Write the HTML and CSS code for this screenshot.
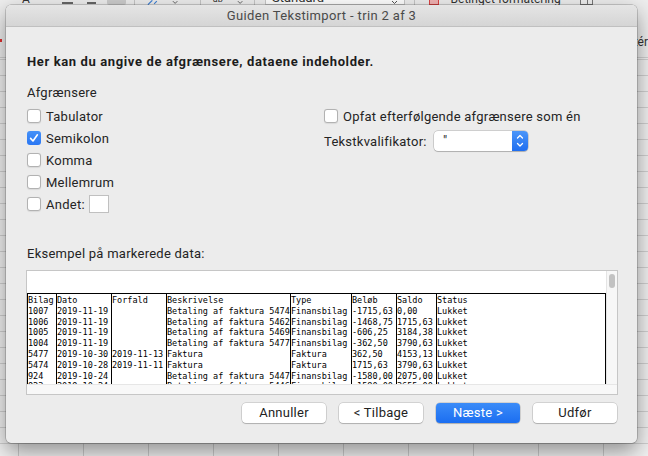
FILE: index.html
```html
<!DOCTYPE html>
<html lang="da">
<head>
<meta charset="utf-8">
<title>Guiden Tekstimport - trin 2 af 3</title>
<link rel="stylesheet" href="styles.css">
</head>
<body>
<div class="desktop">
  <div class="ribbon">
    <span class="rb-text rb-a">A</span>
    <span class="rb-dash rb-d1"></span>
    <span class="rb-dash rb-d2"></span>
    <span class="rb-hl"></span>
    <span class="rb-sep rb-s1"></span>
    <svg class="rb-icon rb-arrow" width="12" height="5" viewBox="0 0 12 5"><path d="M1 5 L6 0 M8 4 L11 1" stroke="#3b7fd6" stroke-width="1.2" fill="none"/></svg>
    <svg class="rb-chev rb-c1" width="7" height="5" viewBox="0 0 7 5"><path d="M1 1 L3.5 3.5 L6 1" stroke="#555" stroke-width="1" fill="none"/></svg>
    <span class="rb-sep rb-s2"></span>
    <span class="rb-text rb-ab">ab</span>
    <svg class="rb-chev rb-c2" width="7" height="5" viewBox="0 0 7 5"><path d="M1 1 L3.5 3.5 L6 1" stroke="#555" stroke-width="1" fill="none"/></svg>
    <span class="rb-sep rb-s3"></span>
    <span class="rb-drop"><span class="rb-text">Standard</span><svg width="7" height="5" viewBox="0 0 7 5"><path d="M1 1 L3.5 3.5 L6 1" stroke="#555" stroke-width="1" fill="none"/></svg></span>
    <span class="rb-sep rb-s4"></span>
    <span class="rb-red"></span>
    <span class="rb-text rb-cond">Betinget formatering</span>
    <span class="rb-gridicon"></span>
    <span class="rb-side"><span>Slet</span><span>Formatér</span></span>
  </div>
  <div class="sheet"></div>
  <span class="red-mark"></span>

  <div class="dialog">
    <div class="titlebar">Guiden Tekstimport - trin 2 af 3</div>
    <div class="content">
      <h1 class="heading">Her kan du angive de afgrænsere, dataene indeholder.</h1>
      <div class="options">
        <div class="col-left">
          <div class="group-label">Afgrænsere</div>
          <div class="check-row"><span class="cb"></span><span class="lbl">Tabulator</span></div>
          <div class="check-row"><span class="cb on"><svg width="14" height="14" viewBox="0 0 14 14"><path d="M3.6 7.4 L6 10 L10.4 3.8" stroke="#fff" stroke-width="1.6" fill="none" stroke-linecap="round" stroke-linejoin="round"/></svg></span><span class="lbl">Semikolon</span></div>
          <div class="check-row"><span class="cb"></span><span class="lbl">Komma</span></div>
          <div class="check-row"><span class="cb"></span><span class="lbl">Mellemrum</span></div>
          <div class="check-row"><span class="cb"></span><span class="lbl">Andet:</span><span class="other-input"></span></div>
        </div>
        <div class="col-right">
          <div class="check-row"><span class="cb"></span><span class="lbl">Opfat efterfølgende afgrænsere som én</span></div>
          <div class="qual-row">
            <span class="qual-label">Tekstkvalifikator:</span>
            <div class="select">
              <span class="select-val">"</span>
              <span class="stepper"><svg width="16" height="20" viewBox="0 0 16 20"><path d="M5.5 7 L8 4.5 L10.5 7 M5.5 12.5 L8 15 L10.5 12.5" stroke="#fff" stroke-width="1.3" fill="none" stroke-linecap="round" stroke-linejoin="round"/></svg></span>
            </div>
          </div>
        </div>
      </div>
      <div class="preview-label">Eksempel på markerede data:</div>
      <div class="preview">
        <div class="preview-body">
          <div class="data-area">
            <div class="grid">
              <span class="h">Bilag</span><span class="h">Dato</span><span class="h">Forfald</span><span class="h">Beskrivelse</span><span class="h">Type</span><span class="h">Beløb</span><span class="h">Saldo</span><span class="h">Status</span>
              <span>1007</span><span>2019-11-19</span><span></span><span>Betaling af faktura 5474</span><span>Finansbilag</span><span>-1715,63</span><span>0,00</span><span>Lukket</span>
              <span>1006</span><span>2019-11-19</span><span></span><span>Betaling af faktura 5462</span><span>Finansbilag</span><span>-1468,75</span><span>1715,63</span><span>Lukket</span>
              <span>1005</span><span>2019-11-19</span><span></span><span>Betaling af faktura 5469</span><span>Finansbilag</span><span>-606,25</span><span>3184,38</span><span>Lukket</span>
              <span>1004</span><span>2019-11-19</span><span></span><span>Betaling af faktura 5477</span><span>Finansbilag</span><span>-362,50</span><span>3790,63</span><span>Lukket</span>
              <span>5477</span><span>2019-10-30</span><span>2019-11-13</span><span>Faktura</span><span>Faktura</span><span>362,50</span><span>4153,13</span><span>Lukket</span>
              <span>5474</span><span>2019-10-28</span><span>2019-11-11</span><span>Faktura</span><span>Faktura</span><span>1715,63</span><span>3790,63</span><span>Lukket</span>
              <span>924</span><span>2019-10-24</span><span></span><span>Betaling af faktura 5447</span><span>Finansbilag</span><span>-1580,00</span><span>2075,00</span><span>Lukket</span>
              <span>923</span><span>2019-10-24</span><span></span><span>Betaling af faktura 5446</span><span>Finansbilag</span><span>-1580,00</span><span>3655,00</span><span>Lukket</span>
            </div>
          </div>
          <div class="vscroll"><div class="thumb"></div></div>
        </div>
        <div class="hstrip"></div>
      </div>
      <div class="buttons">
        <button class="btn">Annuller</button>
        <button class="btn">&lt; Tilbage</button>
        <button class="btn primary">Næste &gt;</button>
        <button class="btn">Udfør</button>
      </div>
    </div>
  </div>
</div>
</body>
</html>
```
FILE: styles.css
```css
* { box-sizing: border-box; }
html, body { margin: 0; padding: 0; }
body {
  width: 648px;
  height: 456px;
  overflow: hidden;
  font-family: Roboto, "Noto Sans", sans-serif;
}
.desktop {
  position: relative;
  width: 648px;
  height: 456px;
  overflow: hidden;
  background: #f2f2f2;
}

/* background ribbon of the spreadsheet app */
.ribbon {
  height: 58px;
  display: flex;
  align-items: flex-start;
  background: #eeeeee;
  border-bottom: 1px solid #d0d0d0;
  font-size: 12px;
  color: #333;
}
.rb-text { display: block; line-height: 14px; margin-top: -8px; white-space: nowrap; }
.rb-a { margin-left: 22px; width: 8px; }
.rb-dash { display: block; height: 1.5px; background: #666; margin-top: 2px; }
.rb-d1 { margin-left: 32px; width: 12px; }
.rb-d2 { margin-left: 14px; width: 11px; }
.rb-hl { display: block; margin-left: 11px; width: 21px; height: 5px; background: #cdcdcd; border-radius: 0 0 2px 2px; }
.rb-sep { display: block; width: 1px; height: 5px; background: #c6c6c6; }
.rb-s1 { margin-left: 8px; }
.rb-s2 { margin-left: 22px; }
.rb-s3 { margin-left: 11px; }
.rb-s4 { margin-left: 9px; }
.rb-icon { display: block; }
.rb-arrow { margin-left: 12px; }
.rb-chev { display: block; margin-left: 14px; }
.rb-c2 { margin-left: 14px; }
.rb-ab { margin-left: 12px; width: 10px; font-size: 9px; }
.rb-drop {
  display: flex;
  justify-content: space-between;
  align-items: flex-start;
  margin-left: 10px;
  width: 155px;
  height: 5px;
  background: #fff;
  border: 1px solid #c8c8c8;
  border-top: 0;
  padding: 0 6px 0 6px;
  overflow: hidden;
}
.rb-drop .rb-text { margin-top: -9px; font-size: 13px; }
.rb-red { display: block; margin-left: 14px; width: 11px; height: 5px; background: #f3b3b3; border: 1px solid #d44; border-top: 0; }
.rb-cond { margin-left: 12px; width: 140px; }
.rb-gridicon {
  display: block;
  margin-left: 5px;
  width: 14px;
  height: 5px;
  border: 1px solid #777;
  border-top: 0;
  background: linear-gradient(to right, transparent 6px, #777 6px, #777 7px, transparent 7px);
}
.rb-side {
  display: flex;
  flex-direction: column;
  margin-left: 6px;
  margin-top: 8px;
  line-height: 22.5px;
  font-size: 12px;
  white-space: nowrap;
}
.sheet {
  height: 398px;
  background-color: #f1f1f1;
  background-image:
    linear-gradient(to right, #cbcbcb 1px, transparent 1px),
    linear-gradient(to bottom, #d0d0d0 1px, transparent 1px);
  background-size: 65px 16px;
  background-position: 18px 1px;
}
.red-mark {
  position: absolute;
  left: 0;
  top: 39px;
  width: 2px;
  height: 3px;
  background: #e03030;
}

/* dialog window */
.dialog {
  position: absolute;
  left: 6px;
  top: 5px;
  width: 631px;
  height: 438px;
  display: flex;
  flex-direction: column;
  background: #ececec;
  border-radius: 5px;
  overflow: hidden;
  box-shadow: 0 0 0 0.5px rgba(0, 0, 0, 0.32), 0 8px 22px rgba(0, 0, 0, 0.42);
}
.titlebar {
  flex: none;
  height: 22px;
  padding-top: 3px;
  background: linear-gradient(#e5e5e5, #d5d5d5);
  border-bottom: 1px solid #c0c0c0;
  text-align: center;
  font-size: 13px;
  line-height: 16px;
  letter-spacing: 0.35px;
  color: #4a4a4a;
}
.content {
  flex: 1;
  display: flex;
  flex-direction: column;
  padding: 27px 20px 20px 21px;
  color: #242424;
  font-size: 13px;
  letter-spacing: 0.25px;
}
.heading {
  margin: 0;
  font-size: 13px;
  font-weight: 700;
  line-height: 16px;
  letter-spacing: 0.62px;
  color: #1c1c1c;
}
.options {
  display: flex;
  margin-top: 15px;
}
.col-left { width: 297px; flex: none; }
.col-right { margin-top: 20px; }
.group-label { line-height: 16px; margin-bottom: 4px; }
.check-row {
  display: flex;
  align-items: center;
  height: 22px;
}
.cb {
  flex: none;
  width: 14px;
  height: 14px;
  border-radius: 3px;
  background: #fff;
  box-shadow: inset 0 0 0 1px #b2b2b2, 0 0.5px 1px rgba(0, 0, 0, 0.08);
  margin-right: 5px;
}
.cb.on {
  background: linear-gradient(#4591f8, #2a77f3);
  box-shadow: none;
}
.cb svg { display: block; }
.lbl { line-height: 16px; padding-top: 2px; white-space: nowrap; }
.other-input {
  flex: none;
  width: 20px;
  height: 18px;
  margin-left: 4px;
  background: #fff;
  border: 1px solid #c0c0c0;
}
.qual-row {
  display: flex;
  align-items: center;
  height: 20px;
  margin-top: 4px;
}
.qual-label { width: 110px; flex: none; line-height: 16px; padding-top: 1px; white-space: nowrap; }
.select {
  display: flex;
  width: 94px;
  height: 20px;
  background: #fff;
  border-radius: 4px;
  box-shadow: 0 0 0 0.5px rgba(0, 0, 0, 0.25), 0 1px 1px rgba(0, 0, 0, 0.15);
}
.select-val { flex: 1; padding-left: 9px; line-height: 20px; color: #222; }
.stepper {
  width: 16px;
  height: 20px;
  border-radius: 0 4px 4px 0;
  background: linear-gradient(#4b96f9, #1f6ef0);
}
.stepper svg { display: block; }

.preview-label { margin-top: 31px; line-height: 16px; }
.preview {
  margin: 8px -1px 0;
  height: 125px;
  border: 1px solid #c6c6c6;
  background: #f8f8f8;
  display: flex;
  flex-direction: column;
  letter-spacing: 0;
}
.preview-body { display: flex; height: 113px; }
.data-area {
  width: 579px;
  flex: none;
  background: #fff;
  overflow: hidden;
  padding-top: 22px;
}
.grid {
  display: grid;
  grid-template-columns: 29px 55px 55px 124px 61px 45px 40px 1fr;
  width: 579px;
  border-top: 1px solid #000;
  border-right: 1px solid #000;
  font-family: "DejaVu Sans Mono", "Liberation Mono", monospace;
  font-size: 8.5px;
  line-height: 10.8px;
  color: #000;
}
.grid span {
  height: 10.8px;
  border-left: 1px solid #000;
  white-space: nowrap;
}
.grid span.h { height: 11.8px; padding-top: 1px; }
.vscroll {
  flex: 1;
  background: #f7f7f7;
  border-left: 1px solid #e4e4e4;
  padding: 3px 0 0 2px;
}
.thumb { width: 6px; height: 14px; border-radius: 3px; background: #c2c2c2; }
.hstrip { flex: 1; border-top: 1px solid #e6e6e6; background: #f8f8f8; }

.buttons {
  display: flex;
  justify-content: flex-end;
  gap: 13px;
  margin-top: 8px;
}
.btn {
  width: 84px;
  height: 20px;
  padding: 0;
  border: 0;
  border-radius: 4px;
  background: #fff;
  box-shadow: 0 0 0 0.5px rgba(0, 0, 0, 0.22), 0 1px 1px rgba(0, 0, 0, 0.16);
  font-family: Roboto, "Noto Sans", sans-serif;
  font-size: 13px;
  line-height: 16px;
  letter-spacing: 0.25px;
  color: #222;
}
.btn.primary {
  background: linear-gradient(#3b8cf8, #1b6ef1);
  color: #fff;
}
```
